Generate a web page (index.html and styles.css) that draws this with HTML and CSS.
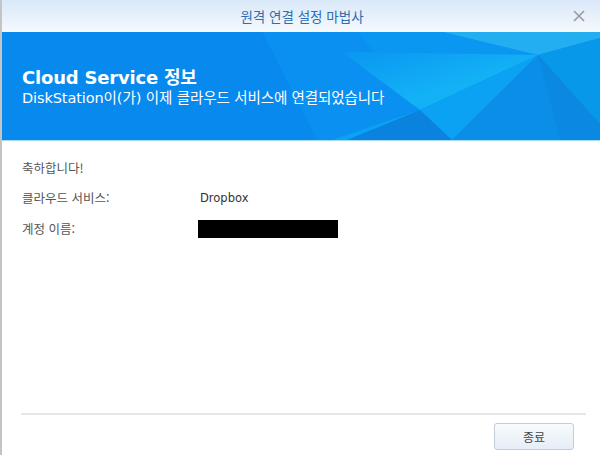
FILE: index.html
```html
<!DOCTYPE html>
<html lang="ko">
<head>
<meta charset="utf-8">
<title>원격 연결 설정 마법사</title>
<link rel="stylesheet" href="styles.css">
</head>
<body>
<div class="window">
  <div class="titlebar">
    <span class="title">원격 연결 설정 마법사</span>
    <span class="close" aria-label="닫기">
      <svg width="12" height="12" viewBox="0 0 12 12"><path d="M1 1 L11 11 M11 1 L1 11" stroke="#9a9a9a" stroke-width="1.6" fill="none"/></svg>
    </span>
  </div>
  <div class="banner">
    <svg class="banner-bg" width="598" height="108" viewBox="0 0 598 108" preserveAspectRatio="none">
      <defs>
        <linearGradient id="cyan" x1="0" y1="0" x2="1" y2="1">
          <stop offset="0" stop-color="#0a96f1"/>
          <stop offset="0.6" stop-color="#13b2f6"/>
          <stop offset="1" stop-color="#0ea6f3"/>
        </linearGradient>
      </defs>
      <rect width="598" height="108" fill="#0a8cef"/>
      <polygon points="260,0 598,0 598,108 315,108" fill="#0a90f0"/>
      <polygon points="356,0 441,0 536,23 418,78" fill="#0a97f2"/>
      <polygon points="340,20 536,23 418,78" fill="url(#cyan)"/>
      <polygon points="418,78 536,23 450,108 330,108" fill="#0ba2f3"/>
      <polygon points="441,0 598,0 598,6 536,23" fill="#24aef2"/>
      <polygon points="536,23 598,6 598,92" fill="#0898ea"/>
      <polygon points="536,23 598,92 598,108 558,108" fill="#0a88e2"/>
      <polygon points="536,23 558,108 450,108" fill="#0a8ee7"/>
      <polygon points="418,78 450,108 345,108" fill="#0a82de"/>
      <polygon points="0,0 260,0 315,108 0,108" fill="#0889ee"/>
    </svg>
    <div class="banner-text">
      <h1 class="heading">Cloud Service 정보</h1>
      <p class="subheading">DiskStation이(가) 이제 클라우드 서비스에 연결되었습니다</p>
    </div>
  </div>
  <div class="content">
    <p class="congrats">축하합니다!</p>
    <div class="row">
      <span class="label">클라우드 서비스:</span>
      <span class="value">Dropbox</span>
    </div>
    <div class="row">
      <span class="label">계정 이름:</span>
      <span class="redacted"></span>
    </div>
  </div>
  <div class="footer">
    <button class="btn" type="button">종료</button>
  </div>
</div>
</body>
</html>
```

FILE: styles.css
```css
* { box-sizing: border-box; }
html, body { margin: 0; padding: 0; }
body {
  width: 600px;
  height: 455px;
  background: #ffffff;
  font-family: "DejaVu Sans", "Noto Sans CJK KR", sans-serif;
  overflow: hidden;
}
.window {
  width: 600px;
  height: 455px;
  border-left: 2px solid #c4c4c4;
  display: flex;
  flex-direction: column;
  background: #fff;
}
.titlebar {
  height: 32px;
  flex: none;
  background: linear-gradient(#d9e8f8, #f5f9fe);
  display: flex;
  align-items: center;
  justify-content: center;
  position: relative;
}
.title {
  font-family: "Noto Sans CJK KR", sans-serif;
  font-size: 13.5px;
  color: #2d6db5;
  margin-left: 2px;
  margin-top: -1px;
}
.close {
  position: absolute;
  right: 15px;
  top: 10px;
  width: 12px;
  height: 12px;
  display: flex;
}
.banner {
  height: 109px;
  flex: none;
  position: relative;
  border-bottom: 1px solid #a9d9f9;
  overflow: hidden;
}
.banner-bg {
  position: absolute;
  left: 0;
  top: 0;
  width: 100%;
  height: 108px;
  display: block;
}
.banner-text {
  position: relative;
  padding: 35px 0 0 20px;
  color: #fff;
}
.heading {
  margin: 0;
  font-family: "DejaVu Sans", "Noto Sans CJK KR", sans-serif;
  font-weight: bold;
  font-size: 18px;
  line-height: 22px;
  letter-spacing: -0.2px;
}
.subheading {
  margin: -1px 0 0;
  font-family: "DejaVu Sans", "Noto Sans CJK KR", sans-serif;
  font-size: 14.5px;
  line-height: 20px;
  letter-spacing: -0.1px;
}
.content {
  flex: 1;
  padding: 18px 0 0 20px;
  font-size: 12.5px;
  color: #555;
  font-family: "Noto Sans CJK KR", sans-serif;
}
.congrats {
  margin: 0 0 12px;
  line-height: 18px;
}
.row {
  display: flex;
  align-items: center;
  height: 18px;
  margin-bottom: 13px;
}
.label {
  width: 178px;
  flex: none;
  line-height: 18px;
}
.value {
  font-family: "DejaVu Sans", sans-serif;
  color: #333;
  font-size: 11.5px;
}
.redacted {
  display: block;
  width: 140px;
  height: 18px;
  background: #000;
  margin-left: -2px;
}
.footer {
  height: 42px;
  flex: none;
  margin: 0 14px 0 19px;
  border-top: 2px solid #e3e6ea;
  display: flex;
  justify-content: flex-end;
  align-items: flex-start;
  padding-top: 8px;
}
.btn {
  width: 80px;
  height: 27px;
  border: 1px solid #c3ccd8;
  border-radius: 3px;
  background: linear-gradient(#f8fbfe, #e6edf5);
  font-family: "Noto Sans CJK KR", sans-serif;
  font-size: 12px;
  color: #444;
  padding: 0;
  margin-right: 12px;
}
```
